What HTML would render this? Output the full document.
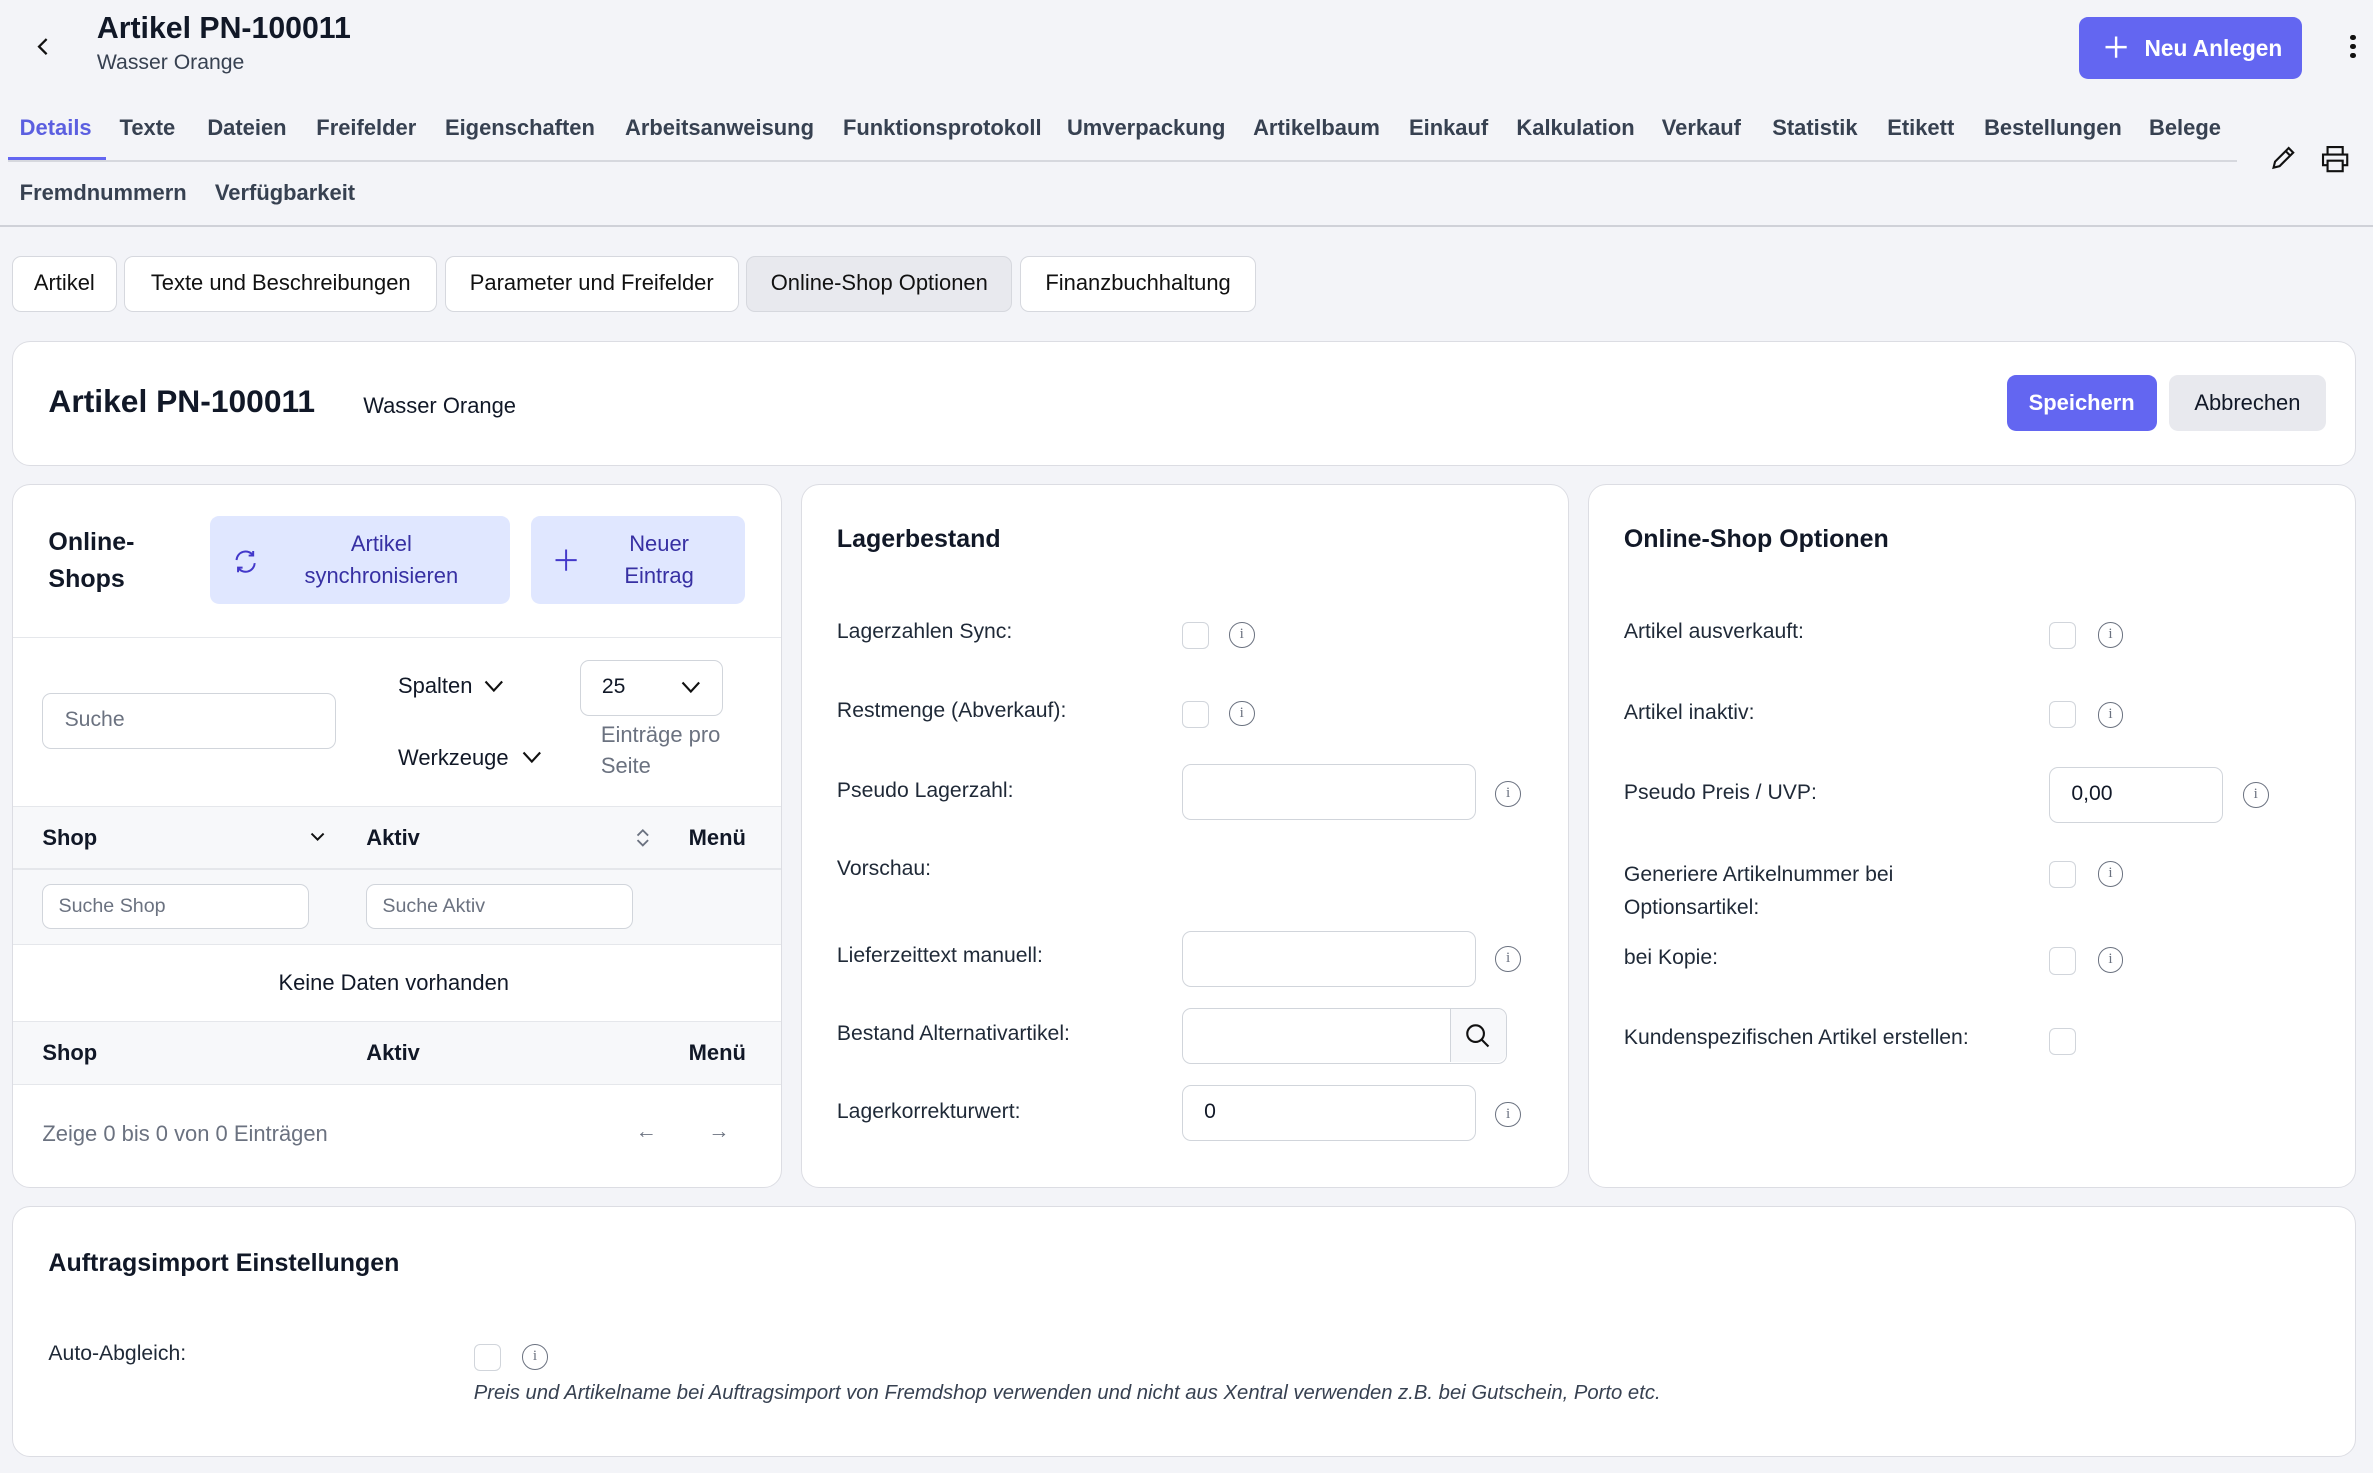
<!DOCTYPE html>
<html><head><meta charset="utf-8"><style>
*{box-sizing:border-box;margin:0;padding:0}
html,body{width:2373px;height:1473px;overflow:hidden;background:#f3f4f8}
#r{zoom:1.5134;width:1568px;height:974px;position:relative;font-family:"Liberation Sans",sans-serif;color:#111827;font-size:14px}
.a{position:absolute;white-space:nowrap}
.card{position:absolute;background:#fff;border:1px solid #dcdde3;border-radius:12px}
.tab{position:absolute;top:76px;font-size:14.5px;font-weight:bold;color:#374151}
.btn{position:absolute;top:169px;height:37px;border:1px solid #d6d8de;border-radius:6px;background:#fff;font-size:14.5px;line-height:35px;text-align:center;color:#111}
.inp{position:absolute;border:1px solid #d1d5db;border-radius:6px;background:#fff;height:37px;font-size:14px;line-height:35px;padding-left:14px}
.cb{position:absolute;width:18px;height:18px;border:1px solid #d1d5db;border-radius:4px;background:#fff}
.info{position:absolute;width:17px;height:17px;border:1.3px solid #6b7280;border-radius:50%;font-size:10px;line-height:15px;text-align:center;color:#6b7280;font-family:"Liberation Serif",serif}
.lbl{position:absolute;font-size:14px;color:#1f2937}
.h{position:absolute;font-size:16.5px;font-weight:bold}
</style></head><body><div id="r">
<svg class="a" style="left:22px;top:24px" width="14" height="14" viewBox="0 0 14 14"><path d="M9 2L4 7l5 5" fill="none" stroke="#111" stroke-width="1.5"/></svg>
<div class="a" style="left:64px;top:8px;font-size:20px;font-weight:bold">Artikel PN-100011</div>
<div class="a" style="left:64px;top:34px;font-size:14px;color:#374151">Wasser Orange</div>
<div class="a" style="left:1374px;top:11px;width:147px;height:41px;background:#6366f1;border-radius:6px;color:#fff;font-size:15px;font-weight:bold;line-height:41px;padding-left:43px">Neu Anlegen</div>
<svg class="a" style="left:1390px;top:23px" width="16" height="16"><path d="M8 1v14M1 8h14" stroke="#fff" stroke-width="1.6"/></svg>
<div class="a" style="left:1553px;top:23px;width:4px">
<div style="width:3.5px;height:3.5px;background:#111;border-radius:50%;margin-bottom:2.5px"></div><div style="width:3.5px;height:3.5px;background:#111;border-radius:50%;margin-bottom:2.5px"></div><div style="width:3.5px;height:3.5px;background:#111;border-radius:50%"></div></div>
<div class="tab" style="left:13px;color:#5b5fe0">Details</div>
<div class="a" style="left:5px;top:104px;width:65px;height:3px;background:#6366f1"></div>
<div class="a" style="left:5px;top:106px;width:1473px;height:1px;background:#d6d8de"></div>
<div class="tab" style="left:79px">Texte</div><div class="tab" style="left:137px">Dateien</div><div class="tab" style="left:209px">Freifelder</div><div class="tab" style="left:294px">Eigenschaften</div><div class="tab" style="left:413px">Arbeitsanweisung</div><div class="tab" style="left:557px">Funktionsprotokoll</div><div class="tab" style="left:705px">Umverpackung</div><div class="tab" style="left:828px">Artikelbaum</div><div class="tab" style="left:931px">Einkauf</div><div class="tab" style="left:1002px">Kalkulation</div><div class="tab" style="left:1098px">Verkauf</div><div class="tab" style="left:1171px">Statistik</div><div class="tab" style="left:1247px">Etikett</div><div class="tab" style="left:1311px">Bestellungen</div><div class="tab" style="left:1420px">Belege</div>
<div class="tab" style="left:13px;top:119px">Fremdnummern</div><div class="tab" style="left:142px;top:119px">Verfügbarkeit</div>
<div class="a" style="left:0;top:149px;width:1568px;height:1px;background:#cfd1d8"></div>
<svg class="a" style="left:1499px;top:96px" width="18" height="18" viewBox="0 0 18 18"><path d="M3 15l1-4 9-9 3 3-9 9z M11 4l3 3" fill="none" stroke="#111" stroke-width="1.4"/></svg>
<svg class="a" style="left:1533px;top:95px" width="20" height="20" viewBox="0 0 20 20"><path d="M5 7V2h10v5M5 14H2V7h16v7h-3M5 11h10v7H5z" fill="none" stroke="#111" stroke-width="1.4"/></svg>
<div class="btn" style="left:8px;width:69px">Artikel</div><div class="btn" style="left:82px;width:207px">Texte und Beschreibungen</div><div class="btn" style="left:294px;width:194px">Parameter und Freifelder</div><div class="btn" style="left:493px;width:176px;background:#e8e9ee">Online-Shop Optionen</div><div class="btn" style="left:674px;width:156px">Finanzbuchhaltung</div>
<div class="card" style="left:8px;top:225px;width:1549px;height:83px"></div>
<div class="a" style="left:32px;top:253px;font-size:21px;font-weight:bold">Artikel PN-100011</div>
<div class="a" style="left:240px;top:260px;font-size:14.5px">Wasser Orange</div>
<div class="a" style="left:1326px;top:248px;width:99px;height:37px;background:#6366f1;border-radius:6px;color:#fff;font-size:14.5px;font-weight:bold;line-height:37px;text-align:center">Speichern</div>
<div class="a" style="left:1433px;top:248px;width:104px;height:37px;background:#e8e9ee;border-radius:6px;font-size:14.5px;line-height:37px;text-align:center">Abbrechen</div>
<div class="card" style="left:8px;top:320px;width:509px;height:465px;overflow:hidden">
<div class="a" style="left:0;top:100px;width:509px;height:1px;background:#e5e7eb"></div>
<div class="a" style="left:0;top:212px;width:509px;height:92px;background:#f7f8fa;border-top:1px solid #e5e7eb;border-bottom:1px solid #e5e7eb"></div>
<div class="a" style="left:0;top:253px;width:509px;height:1px;background:#e5e7eb"></div>
<div class="a" style="left:0;top:354px;width:509px;height:42px;background:#f7f8fa;border-top:1px solid #e5e7eb;border-bottom:1px solid #e5e7eb"></div>
</div>
<div class="h" style="left:32px;top:346px;line-height:25px">Online-<br>Shops</div>
<div class="a" style="left:139px;top:341px;width:198px;height:58px;background:#e0e7ff;border-radius:6px;color:#3730a3;font-size:14.5px;text-align:center;line-height:21px;padding:8px 0 0 28px">Artikel<br>synchronisieren</div>
<svg class="a" style="left:153px;top:362px" width="18" height="18" viewBox="0 0 18 18"><path d="M3 8a6 6 0 0 1 11-3M15 10a6 6 0 0 1-11 3M14 2v3h-3M4 16v-3h3" fill="none" stroke="#4338ca" stroke-width="1.3"/></svg>
<div class="a" style="left:351px;top:341px;width:141px;height:58px;background:#e0e7ff;border-radius:6px;color:#3730a3;font-size:14.5px;text-align:center;line-height:21px;padding:8px 0 0 28px">Neuer<br>Eintrag</div>
<svg class="a" style="left:366px;top:362px" width="16" height="16"><path d="M8 1v14M1 8h14" stroke="#4338ca" stroke-width="1.3"/></svg>
<div class="inp" style="left:28px;top:458px;width:194px;color:#6b7280">Suche</div>
<div class="a" style="left:263px;top:445px;font-size:14.5px">Spalten</div>
<svg class="a" style="left:320px;top:449px" width="13" height="9"><path d="M1 1l5.5 6L12 1" fill="none" stroke="#111" stroke-width="1.4"/></svg>
<div class="a" style="left:263px;top:492px;font-size:14.5px">Werkzeuge</div>
<svg class="a" style="left:345px;top:496px" width="13" height="9"><path d="M1 1l5.5 6L12 1" fill="none" stroke="#111" stroke-width="1.4"/></svg>
<div class="inp" style="left:383px;top:436px;width:95px">25<svg style="position:absolute;left:66px;top:13px" width="13" height="9"><path d="M1 1l5.5 6L12 1" fill="none" stroke="#111" stroke-width="1.4"/></svg></div>
<div class="a" style="left:397px;top:476px;font-size:14.5px;color:#6b7280;line-height:20px">Einträge pro<br>Seite</div>
<div class="a" style="left:28px;top:545px;font-weight:bold;font-size:14.5px">Shop</div>
<svg class="a" style="left:205px;top:550px" width="10" height="7"><path d="M1 1l4 4 4-4" fill="none" stroke="#111" stroke-width="1.3"/></svg>
<div class="a" style="left:242px;top:545px;font-weight:bold;font-size:14.5px">Aktiv</div>
<svg class="a" style="left:420px;top:547px" width="9" height="13"><path d="M1 5l3.5-3.5L8 5M1 8l3.5 3.5L8 8" fill="none" stroke="#6b7280" stroke-width="1.2"/></svg>
<div class="a" style="left:455px;top:545px;font-weight:bold;font-size:14.5px">Menü</div>
<div class="inp" style="left:28px;top:584px;width:176px;height:30px;line-height:28px;font-size:13px;padding-left:10px;color:#6b7280">Suche Shop</div>
<div class="inp" style="left:242px;top:584px;width:176px;height:30px;line-height:28px;font-size:13px;padding-left:10px;color:#6b7280">Suche Aktiv</div>
<div class="a" style="left:184px;top:641px;font-size:14.5px">Keine Daten vorhanden</div>
<div class="a" style="left:28px;top:687px;font-weight:bold;font-size:14.5px">Shop</div>
<div class="a" style="left:242px;top:687px;font-weight:bold;font-size:14.5px">Aktiv</div>
<div class="a" style="left:455px;top:687px;font-weight:bold;font-size:14.5px">Menü</div>
<div class="a" style="left:28px;top:741px;font-size:14.5px;color:#6b7280">Zeige 0 bis 0 von 0 Einträgen</div>
<div class="a" style="left:420px;top:740px;font-size:14px;color:#6b7280">←</div>
<div class="a" style="left:468px;top:740px;font-size:14px;color:#6b7280">→</div>
<div class="card" style="left:529px;top:320px;width:508px;height:465px"></div>
<div class="h" style="left:553px;top:347px">Lagerbestand</div>
<div class="lbl" style="left:553px;top:410px">Lagerzahlen Sync:</div><div class="cb" style="left:781px;top:411px"></div><div class="info" style="left:812px;top:411px">i</div>
<div class="lbl" style="left:553px;top:462px">Restmenge (Abverkauf):</div><div class="cb" style="left:781px;top:463px"></div><div class="info" style="left:812px;top:463px">i</div>
<div class="lbl" style="left:553px;top:515px">Pseudo Lagerzahl:</div><div class="inp" style="left:781px;top:505px;width:194px"></div><div class="info" style="left:988px;top:516px">i</div>
<div class="lbl" style="left:553px;top:566px">Vorschau:</div>
<div class="lbl" style="left:553px;top:624px">Lieferzeittext manuell:</div><div class="inp" style="left:781px;top:615px;width:194px"></div><div class="info" style="left:988px;top:625px">i</div>
<div class="lbl" style="left:553px;top:675px">Bestand Alternativartikel:</div><div class="inp" style="left:781px;top:666px;width:215px"></div>
<div class="a" style="left:958px;top:667px;width:37px;height:35px;background:#f7f8fa;border-left:1px solid #d1d5db;border-radius:0 6px 6px 0"></div>
<svg class="a" style="left:968px;top:676px" width="17" height="17"><circle cx="7" cy="7" r="5.5" fill="none" stroke="#111" stroke-width="1.4"/><path d="M11 11l4.5 4.5" stroke="#111" stroke-width="1.4"/></svg>
<div class="lbl" style="left:553px;top:727px">Lagerkorrekturwert:</div><div class="inp" style="left:781px;top:717px;width:194px">0</div><div class="info" style="left:988px;top:728px">i</div>
<div class="card" style="left:1049px;top:320px;width:508px;height:465px"></div>
<div class="h" style="left:1073px;top:347px">Online-Shop Optionen</div>
<div class="lbl" style="left:1073px;top:410px">Artikel ausverkauft:</div><div class="cb" style="left:1354px;top:411px"></div><div class="info" style="left:1386px;top:411px">i</div>
<div class="lbl" style="left:1073px;top:463px">Artikel inaktiv:</div><div class="cb" style="left:1354px;top:463px"></div><div class="info" style="left:1386px;top:464px">i</div>
<div class="lbl" style="left:1073px;top:516px">Pseudo Preis / UVP:</div><div class="inp" style="left:1354px;top:507px;width:115px">0,00</div><div class="info" style="left:1482px;top:517px">i</div>
<div class="lbl" style="left:1073px;top:567px;line-height:22px">Generiere Artikelnummer bei<br>Optionsartikel:</div><div class="cb" style="left:1354px;top:569px"></div><div class="info" style="left:1386px;top:569px">i</div>
<div class="lbl" style="left:1073px;top:625px">bei Kopie:</div><div class="cb" style="left:1354px;top:626px"></div><div class="info" style="left:1386px;top:626px">i</div>
<div class="lbl" style="left:1073px;top:678px">Kundenspezifischen Artikel erstellen:</div><div class="cb" style="left:1354px;top:679px"></div>
<div class="card" style="left:8px;top:797px;width:1549px;height:166px"></div>
<div class="h" style="left:32px;top:825px">Auftragsimport Einstellungen</div>
<div class="lbl" style="left:32px;top:887px">Auto-Abgleich:</div><div class="cb" style="left:313px;top:888px"></div><div class="info" style="left:345px;top:888px">i</div>
<div class="a" style="left:313px;top:913px;font-size:13.4px;font-style:italic;color:#374151">Preis und Artikelname bei Auftragsimport von Fremdshop verwenden und nicht aus Xentral verwenden z.B. bei Gutschein, Porto etc.</div>
</div></body></html>
